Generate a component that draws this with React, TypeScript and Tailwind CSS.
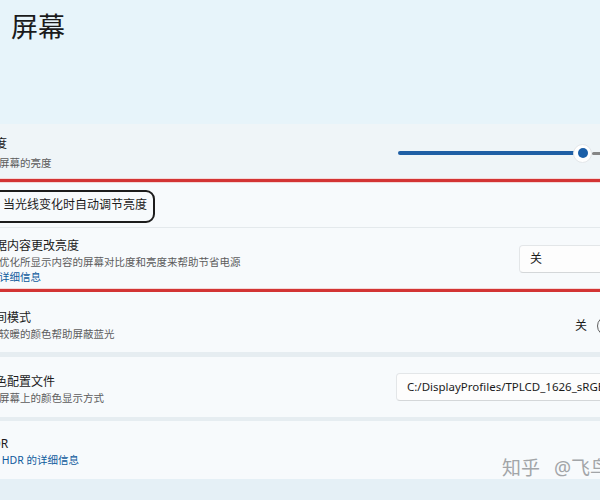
import React from 'react';

const font = "font-['Noto_Sans','Noto_Sans_CJK_SC',sans-serif]";

function Texts({ title, sub, link, subLink, subGap }: { title: string; sub?: string; link?: string; subLink?: boolean; subGap?: string }) {
  return (
    <div className="flex flex-col">
      <span className="pl-[5px] text-[12px] leading-[16px] text-[#1b1b1b] whitespace-nowrap">{title}</span>
      {sub && (
        <span className={`${subGap ?? ''} text-[10.5px] leading-[16px] whitespace-nowrap ${subLink ? 'text-[#0f5a9c]' : 'text-[#5c5c5c]'}`}>{sub}</span>
      )}
      {link && <span className="text-[10.5px] leading-[15px] text-[#0f5a9c] whitespace-nowrap">{link}</span>}
    </div>
  );
}

function Dropdown({ value, width, size }: { value: string; width: string; size: string }) {
  return (
    <div className={`${width} ${size} h-[28px] ml-auto flex items-center px-[10px] bg-[#fdfdfd] border border-[#e3e6e8] border-b-[#d4d7d9] rounded-[4px] text-[#1b1b1b] whitespace-nowrap overflow-hidden`}>
      {value}
    </div>
  );
}

export default function App() {
  return (
    <div className={`relative w-[600px] h-[500px] overflow-hidden bg-[#e5f0f6] ${font}`}>
      <div className="bg-[#e7f4fa] h-[124px] pt-[11px] pl-[11px]">
        <h1 className="text-[27px] leading-[32px] text-[#1a1a1a]">屏幕</h1>
      </div>

      <div className="ml-[-60px] w-[720px] flex flex-col bg-[#e6edf1]">
        {/* brightness */}
        <div className="h-[54px] flex items-center pl-[38px] pr-[16px] pt-[4px] bg-[#eff5f8]">
          <Texts title="亮度" sub="调整屏幕的亮度" subGap="mt-[3px]" />
          <div className="w-[246px] ml-auto flex items-center">
            <div className="w-[184px] h-[4px] rounded-full bg-[#1f5fa5]" />
            <div className="-mx-[9px] relative w-[19px] h-[19px] rounded-full bg-white border border-[#e4e7ea] flex items-center justify-center">
              <div className="w-[10px] h-[10px] rounded-full bg-[#1b5fa8]" />
            </div>
            <div className="flex-1 ml-[9px] h-[3px] rounded-full bg-[#868686]" />
          </div>
        </div>

        <div className="h-[5px] flex items-center bg-[#f3d7d7]">
          <div className="w-full h-[3px] bg-[#d33434]" />
        </div>

        {/* auto brightness checkbox */}
        <div className="relative h-[45px] flex items-center pl-[63px] bg-[#f7fafc] border-b border-[#e4e9ec]">
          <span className="text-[12px] text-[#1b1b1b] whitespace-nowrap">当光线变化时自动调节亮度</span>
          <div className="absolute left-[30px] top-[7px] w-[185px] h-[33px] border-2 border-[#1c1c1c] rounded-[9px]" />
        </div>

        {/* content adaptive */}
        <div className="h-[60px] flex items-center pl-[38px] pr-[16px] pt-[6px] bg-[#f7fafc]">
          <Texts title="根据内容更改亮度" sub="通过优化所显示内容的屏幕对比度和亮度来帮助节省电源" link="了解详细信息" />
          <div className="ml-auto -mt-[5px]">
            <Dropdown value="关" width="w-[125px]" size="text-[12px]" />
          </div>
        </div>

        <div className="h-[4px] flex items-center bg-[#f3d7d7]">
          <div className="w-full h-[3px] bg-[#d33434]" />
        </div>

        {/* night light */}
        <div className="h-[60px] flex items-center pl-[38px] pr-[16px] pt-[7px] bg-[#f7fafc]">
          <Texts title="夜间模式" sub="使用较暖的颜色帮助屏蔽蓝光" />
          <div className="ml-auto mr-[7px] flex items-center gap-[10px]">
            <span className="text-[12px] text-[#1b1b1b]">关</span>
            <div className="w-[40px] h-[20px] rounded-full border border-[#5f5f5f] flex items-center px-[4px]">
              <div className="w-[12px] h-[12px] rounded-full bg-[#5f5f5f]" />
            </div>
          </div>
        </div>

        <div className="h-[5px]" />

        {/* color profile */}
        <div className="h-[60px] flex items-center pl-[38px] pr-[16px] pt-[5px] bg-[#f7fafc]">
          <Texts title="颜色配置文件" sub="调整屏幕上的颜色显示方式" />
          <div className="ml-auto -mt-[5px]">
            <Dropdown value="C:/DisplayProfiles/TPLCD_1626_sRGB.icm" width="w-[248px]" size="text-[11.5px]" />
          </div>
        </div>

        <div className="h-[4px]" />

        {/* HDR */}
        <div className="h-[58px] flex items-center pl-[38px] pr-[16px] pt-[3px] bg-[#f7fafc]">
          <Texts title="HDR" sub="关于 HDR 的详细信息" subLink />
        </div>
      </div>

      <div className="absolute left-[502px] top-[454px] text-[19px] text-[#a2a5a8] whitespace-nowrap">
        知乎<span className="ml-[14px]">@飞鸟</span>
      </div>
    </div>
  );
}
